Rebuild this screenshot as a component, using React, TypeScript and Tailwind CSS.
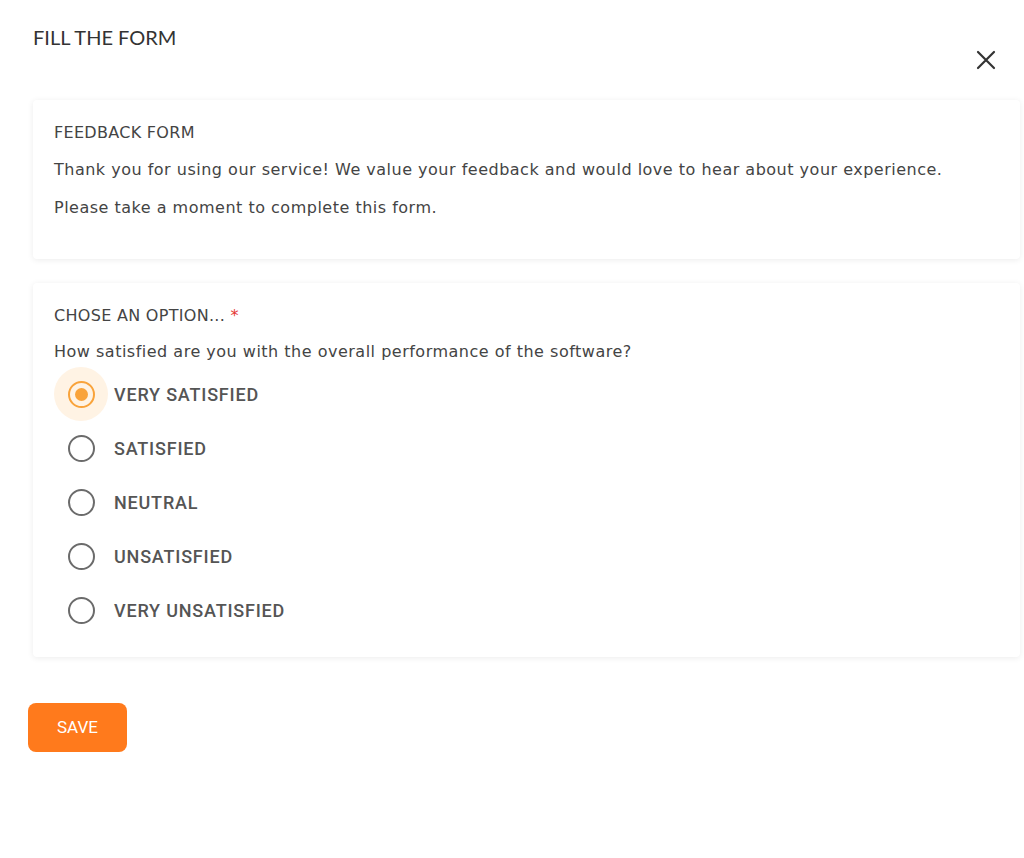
import React from "react";

const options = ["VERY SATISFIED", "SATISFIED", "NEUTRAL", "UNSATISFIED", "VERY UNSATISFIED"];

export default function App() {
  return (
    <div className="min-h-[858px] w-[1024px] bg-white text-[#444]" style={{ fontFamily: "'DejaVu Sans', sans-serif" }}>
      <div className="flex items-start justify-between pl-[33px] pr-[28px] pt-[24px]">
        <h1 className="text-[20px] leading-[26px] text-[#333]" style={{ fontFamily: "Lato, sans-serif" }}>FILL THE FORM</h1>
        <button className="mt-[26px] text-[#333]" aria-label="close">
          <svg width="20" height="20" viewBox="0 0 20 20" fill="none" stroke="currentColor" strokeWidth="2.2" strokeLinecap="round">
            <path d="M2 2L18 18M18 2L2 18" />
          </svg>
        </button>
      </div>

      <div className="ml-[33px] mr-[4px] mt-[30px] flex flex-col gap-[24px]">
        <div className="rounded-[4px] bg-white px-[21px] pt-[22px] pb-[40px] shadow-[0_1px_6px_rgba(0,0,0,0.08)]">
          <div className="text-[16px] leading-[22px] tracking-[0.3px] text-[#444]">FEEDBACK FORM</div>
          <p className="mt-[15px] text-[16px] leading-[22px] tracking-[0.5px]">Thank you for using our service! We value your feedback and would love to hear about your experience.</p>
          <p className="mt-[16px] text-[16px] leading-[22px] tracking-[0.5px]">Please take a moment to complete this form.</p>
        </div>

        <div className="rounded-[4px] bg-white px-[21px] pt-[22px] pb-[20px] shadow-[0_1px_6px_rgba(0,0,0,0.08)]">
          <div className="text-[16px] leading-[22px] tracking-[0.3px] text-[#444]">
            CHOSE AN OPTION... <span className="text-[#e53935]">*</span>
          </div>
          <p className="mt-[14px] text-[16px] leading-[22px] tracking-[0.5px]">How satisfied are you with the overall performance of the software?</p>
          <div className="mt-[4px] flex flex-col">
            {options.map((o, i) => (
              <label key={o} className="flex h-[54px] items-center">
                <span className={`flex h-[54px] w-[54px] items-center justify-center rounded-full ${i === 0 ? "bg-[#fff3e4]" : ""}`}>
                  <span className={`flex h-[27px] w-[27px] items-center justify-center rounded-full border-[2.5px] ${i === 0 ? "border-[#f9a33a]" : "border-[#6b6b6b]"}`}>
                    {i === 0 && <span className="h-[13px] w-[13px] rounded-full bg-[#f9a33a]" />}
                  </span>
                </span>
                <span className="ml-[6px] text-[18px] font-medium tracking-[0.8px] text-[#555]" style={{ fontFamily: "Roboto, sans-serif" }}>{o}</span>
              </label>
            ))}
          </div>
        </div>
      </div>

      <button className="ml-[28px] mt-[46px] h-[49px] w-[99px] rounded-[8px] bg-[#ff7a1c] text-[17px] text-white" style={{ fontFamily: "Roboto, sans-serif" }}>SAVE</button>
    </div>
  );
}
